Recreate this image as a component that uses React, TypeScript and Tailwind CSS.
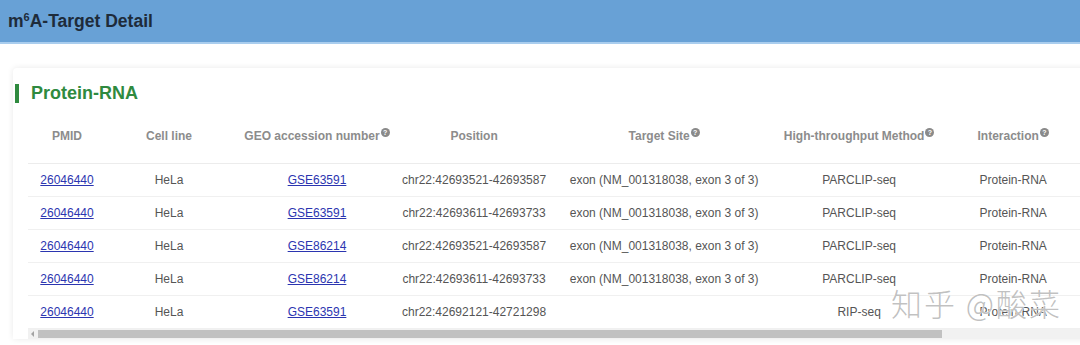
import React from 'react';

type Row = {
  pmid: string;
  cell: string;
  geo: string;
  position: string;
  site: string;
  method: string;
  interaction: string;
};

const rows: Row[] = [
  { pmid: '26046440', cell: 'HeLa', geo: 'GSE63591', position: 'chr22:42693521-42693587', site: 'exon (NM_001318038, exon 3 of 3)', method: 'PARCLIP-seq', interaction: 'Protein-RNA' },
  { pmid: '26046440', cell: 'HeLa', geo: 'GSE63591', position: 'chr22:42693611-42693733', site: 'exon (NM_001318038, exon 3 of 3)', method: 'PARCLIP-seq', interaction: 'Protein-RNA' },
  { pmid: '26046440', cell: 'HeLa', geo: 'GSE86214', position: 'chr22:42693521-42693587', site: 'exon (NM_001318038, exon 3 of 3)', method: 'PARCLIP-seq', interaction: 'Protein-RNA' },
  { pmid: '26046440', cell: 'HeLa', geo: 'GSE86214', position: 'chr22:42693611-42693733', site: 'exon (NM_001318038, exon 3 of 3)', method: 'PARCLIP-seq', interaction: 'Protein-RNA' },
  { pmid: '26046440', cell: 'HeLa', geo: 'GSE63591', position: 'chr22:42692121-42721298', site: '', method: 'RIP-seq', interaction: 'Protein-RNA' },
];

const Help = () => (
  <span className="relative -top-[5px] ml-[1px] inline-flex h-[9px] w-[9px] items-center justify-center rounded-full bg-[#8a8a8a] text-[7px] font-bold leading-none text-white">
    ?
  </span>
);

const columns: { label: string; width: string; help?: boolean }[] = [
  { label: 'PMID', width: 'w-[78px]' },
  { label: 'Cell line', width: 'w-[126px]' },
  { label: 'GEO accession number', width: 'w-[170px]', help: true },
  { label: 'Position', width: 'w-[142px]' },
  { label: 'Target Site', width: 'w-[236px]', help: true },
  { label: 'High-throughput Method', width: 'w-[154px]', help: true },
  { label: 'Interaction', width: 'w-[154px]', help: true },
];

export default function App() {
  return (
    <div className="relative h-[345px] w-[1080px] overflow-hidden bg-white font-['Liberation_Sans',Arial,sans-serif]">
      {/* Page header */}
      <div className="flex h-[44px] items-center border-b-2 border-[#a9cdee] bg-[#68a1d6] pl-[8px]">
        <h1 className="text-[17.5px] font-bold text-[#1e2b3a]">
          m<sup className="text-[11px]">6</sup>A-Target Detail
        </h1>
      </div>

      {/* Card */}
      <div className="ml-[13px] mt-[24px] w-[1100px] rounded-tl-[4px] bg-white pt-[12px] shadow-[0_0_6px_rgba(0,0,0,0.09)]">
        <div className="flex items-center pl-[2px]">
          <span className="h-[19px] w-[4px] bg-[#2f8a3f]" />
          <h2 className="ml-[12px] text-[18px] font-bold text-[#2f8a3f]">Protein-RNA</h2>
        </div>

        <div className="ml-[15px] mt-[3px] overflow-hidden">
          <table className="table-fixed border-collapse whitespace-nowrap text-[12px]">
            <thead>
              <tr className="h-[53px] border-b border-[#ececec]">
                {columns.map((c) => (
                  <th key={c.label} className={`${c.width} text-center align-middle font-bold text-[#8c8c8c]`}>
                    {c.label}
                    {c.help && <Help />}
                  </th>
                ))}
              </tr>
            </thead>
            <tbody className="text-[#555]">
              {rows.map((r, i) => (
                <tr key={i} className="h-[33px] border-b border-[#f0f0f0]">
                  <td className="text-center">
                    <a href="#" className="text-[#2b35b0] underline">{r.pmid}</a>
                  </td>
                  <td className="text-center">{r.cell}</td>
                  <td className="text-center">
                    <a href="#" className="text-[#2b35b0] underline">{r.geo}</a>
                  </td>
                  <td className="text-center">{r.position}</td>
                  <td className="text-center">{r.site}</td>
                  <td className="text-center">{r.method}</td>
                  <td className="text-center">{r.interaction}</td>
                </tr>
              ))}
            </tbody>
          </table>

          {/* Horizontal scrollbar */}
          <div className="flex h-[10px] w-[1060px] items-center bg-[#f1f1f1]">
            <span className="ml-[3px] h-0 w-0 border-y-[3px] border-r-[3px] border-y-transparent border-r-[#a3a3a3]" />
            <div className="ml-[4px] h-[8px] w-[904px] bg-[#c1c1c1]" />
          </div>
        </div>
      </div>

      {/* Watermark */}
      <div className="pointer-events-none absolute left-[891px] top-[280px] font-['Noto_Sans_CJK_SC',sans-serif] text-[31px] font-light tracking-[2px] text-[rgba(140,140,140,0.55)] [text-shadow:0_0_1px_#fff,0_0_1px_#fff]">
        知乎 @酸菜
      </div>
    </div>
  );
}
